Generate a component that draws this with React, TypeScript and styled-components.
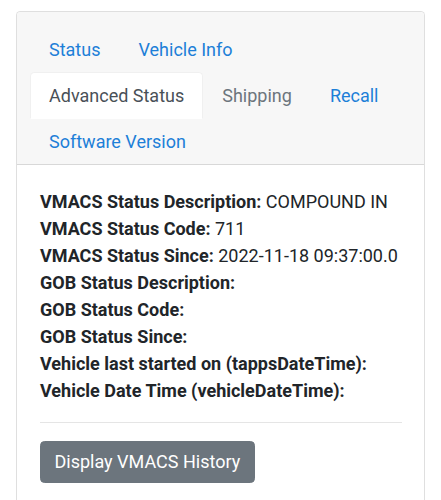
import React from "react";
import styled, { createGlobalStyle } from "styled-components";

const Global = createGlobalStyle`
  html, body { margin: 0; padding: 0; background: #fff; }
  body {
    font-family: Roboto, "Liberation Sans", Arial, sans-serif;
    font-size: 18px;
    line-height: 27px;
    color: #212529;
  }
  * { box-sizing: border-box; }
`;

const Page = styled.div`
  padding: 11px 16px 0;
`;

const Card = styled.div`
  border: 1px solid rgba(0, 0, 0, 0.125);
  border-radius: 4.5px;
  background: #fff;
  overflow: hidden;
`;

const Header = styled.div`
  background: #f7f7f7;
  border-bottom: 1px solid rgba(0, 0, 0, 0.125);
  padding: 14px 13px 0;
`;

const Tabs = styled.ul`
  display: flex;
  flex-wrap: wrap;
  list-style: none;
  margin: 0;
  padding: 0;
`;

const TabItem = styled.li`
  margin-bottom: -1px;
`;

const RowBreak = styled.li`
  flex-basis: 100%;
  height: 0;
`;

const TabLink = styled.a<{ $state?: "active" | "disabled" | "normal" }>`
  display: block;
  padding: 9px 18px;
  border: 1px solid transparent;
  border-top-left-radius: 4.5px;
  border-top-right-radius: 4.5px;
  text-decoration: none;
  cursor: pointer;
  color: ${(p) =>
    p.$state === "active" ? "#495057" : p.$state === "disabled" ? "#6c757d" : "#1d7fd8"};
  background: ${(p) => (p.$state === "active" ? "#fff" : "transparent")};
  border-color: ${(p) =>
    p.$state === "active" ? "#f0f0f0 #f0f0f0 #fff" : "transparent"};
`;

const Body = styled.div`
  padding: 22.5px 22.5px 30px 23px;
`;

const Line = styled.div`
  white-space: nowrap;
`;

const Label = styled.strong`
  font-weight: 700;
`;

const Rule = styled.hr`
  margin: 18px 0;
  border: 0;
  border-top: 1px solid rgba(0, 0, 0, 0.1);
`;

const Button = styled.button`
  font-family: inherit;
  font-size: 18px;
  line-height: 27px;
  color: #fff;
  background: #6c757d;
  border: 1px solid #6c757d;
  border-radius: 4.5px;
  padding: 6.75px 13.5px;
  cursor: pointer;
`;

const tabs: { label: string; state: "active" | "disabled" | "normal"; breakAfter?: boolean }[] = [
  { label: "Status", state: "normal" },
  { label: "Vehicle Info", state: "normal", breakAfter: true },
  { label: "Advanced Status", state: "active" },
  { label: "Shipping", state: "disabled" },
  { label: "Recall", state: "normal" },
  { label: "Software Version", state: "normal" },
];

const rows: [string, string][] = [
  ["VMACS Status Description:", "COMPOUND IN"],
  ["VMACS Status Code:", "711"],
  ["VMACS Status Since:", "2022-11-18 09:37:00.0"],
  ["GOB Status Description:", ""],
  ["GOB Status Code:", ""],
  ["GOB Status Since:", ""],
  ["Vehicle last started on (tappsDateTime):", ""],
  ["Vehicle Date Time (vehicleDateTime):", ""],
];

export default function App() {
  return (
    <Page>
      <Global />
      <Card>
        <Header>
          <Tabs>
            {tabs.map((t) => (
              <React.Fragment key={t.label}>
                <TabItem>
                  <TabLink $state={t.state}>{t.label}</TabLink>
                </TabItem>
                {t.breakAfter && <RowBreak />}
              </React.Fragment>
            ))}
          </Tabs>
        </Header>
        <Body>
          {rows.map(([l, v]) => (
            <Line key={l}>
              <Label>{l}</Label>
              {v ? " " + v : ""}
            </Line>
          ))}
          <Rule />
          <Button>Display VMACS History</Button>
        </Body>
      </Card>
    </Page>
  );
}
